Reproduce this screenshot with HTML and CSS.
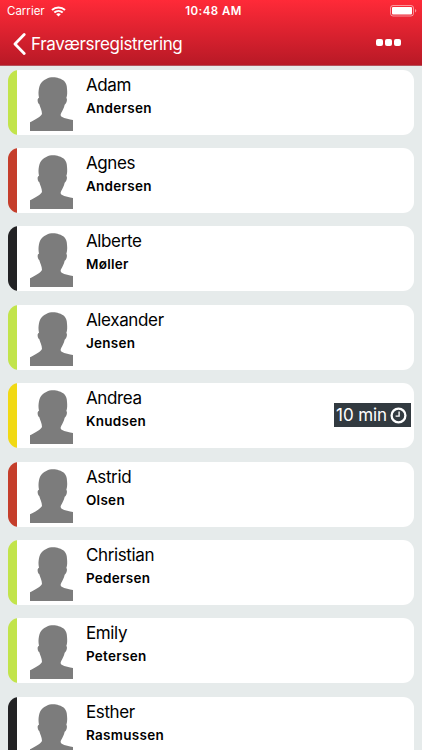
FILE: index.html
```
<!DOCTYPE html>
<html lang="da">
<head>
    <meta charset="UTF-8">
    <meta name="viewport" content="width=device-width, initial-scale=1.0">
    <title>Fraværsregistrering</title>
    <link rel="stylesheet" href="styles.css">
</head>
<body>

    <svg class="symbols" width="0" height="0">
        <symbol id="person" viewBox="0 0 129 162" preserveAspectRatio="none">
            <path d="M27 62C25 52 25 44 27 34C30 14 44 8 50 5C60 0 77 0 86 4C102 8 111 18 111 35C112 46 112 54 109 63C113 65 110 80 104 83C102 93 97 101 94 107C91 112 91 116 95 119C104 125 119 126 129 129V162H0V136C13 129 30 121 36 111C36 100 30 91 28 82C23 78 20 64 27 62Z" fill="#7c7c7c"/>
        </symbol>
    </svg>

    <header class="header">
        <div class="status-bar">
            <div class="carrier">
                <span>Carrier</span>
                <svg class="wifi" width="15" height="11" viewBox="0 0 15 11" fill="none" stroke="#fff" stroke-width="2">
                    <path d="M1 4.1C4.7.6 10.3.6 14 4.1M3.3 6.6C5.7 4.4 9.3 4.4 11.7 6.6"/>
                    <path d="M5.2 8.2Q7.5 6.4 9.8 8.2L7.5 10.6Z" fill="#fff" stroke="none"/>
                </svg>
            </div>
            <div class="time">10:48 AM</div>
            <svg class="battery" width="27" height="12" viewBox="0 0 27 12">
                <rect x=".5" y=".5" width="23" height="10.5" rx="2.5" fill="none" stroke="#fff" stroke-opacity=".5"/>
                <rect x="2" y="2" width="20" height="7.5" rx="1" fill="#fff"/>
                <path d="M25 4V7.6Q26.3 7 26.3 5.8T25 4Z" fill="#fff" fill-opacity=".5"/>
            </svg>
        </div>
        <div class="nav-bar">
            <a class="back" href="#">
                <svg width="13" height="22" viewBox="0 0 13 22" fill="none" stroke="#fff" stroke-width="2.8" stroke-linecap="round" stroke-linejoin="round">
                    <path d="M11.2 1.6L2 11L11.2 20.4"/>
                </svg>
                <span>Fraværsregistrering</span>
            </a>
            <div class="more"><i></i><i></i><i></i></div>
        </div>
    </header>

    <main class="list">
        <div class="card green">
            <svg class="avatar"><use href="#person"/></svg>
            <div class="name"><span>Adam</span><b>Andersen</b></div>
        </div>
        <div class="card red">
            <svg class="avatar"><use href="#person"/></svg>
            <div class="name"><span>Agnes</span><b>Andersen</b></div>
        </div>
        <div class="card black">
            <svg class="avatar"><use href="#person"/></svg>
            <div class="name"><span>Alberte</span><b>Møller</b></div>
        </div>
        <div class="card green">
            <svg class="avatar"><use href="#person"/></svg>
            <div class="name"><span>Alexander</span><b>Jensen</b></div>
        </div>
        <div class="card yellow">
            <svg class="avatar"><use href="#person"/></svg>
            <div class="name"><span>Andrea</span><b>Knudsen</b></div>
            <div class="late">
                <span>10 min</span>
                <svg width="17" height="17" viewBox="0 0 17 17" fill="none" stroke="#fff">
                    <circle cx="8.5" cy="8.5" r="6.9" stroke-width="2.3"/>
                    <path d="M9.1 4.5V9.1H5.6" stroke-width="1.4"/>
                </svg>
            </div>
        </div>
        <div class="card red">
            <svg class="avatar"><use href="#person"/></svg>
            <div class="name"><span>Astrid</span><b>Olsen</b></div>
        </div>
        <div class="card green">
            <svg class="avatar"><use href="#person"/></svg>
            <div class="name"><span>Christian</span><b>Pedersen</b></div>
        </div>
        <div class="card green">
            <svg class="avatar"><use href="#person"/></svg>
            <div class="name"><span>Emily</span><b>Petersen</b></div>
        </div>
        <div class="card black">
            <svg class="avatar"><use href="#person"/></svg>
            <div class="name"><span>Esther</span><b>Rasmussen</b></div>
        </div>
    </main>

</body>
</html>
```
FILE: styles.css
```
body {
    font-family: Inter, "Liberation Sans", sans-serif;
    margin: 0;
    height: 750px;
    overflow: hidden;
    background-color: #e6ebeb;
    color: #000;
}

.symbols {
    display: block;
}

.header {
    height: 66px;
    box-sizing: border-box;
    background: linear-gradient(#ff2a38, #b81926);
    border-bottom: 1px solid #b5505a;
    color: #fff;
}

.status-bar {
    display: grid;
    grid-template-columns: 1fr auto 1fr;
    align-items: center;
    height: 22px;
    padding: 0 5px 0 7px;
    font-size: 11.5px;
}

.carrier {
    display: flex;
    align-items: center;
    gap: 6px;
}

.time {
    font-weight: 600;
    letter-spacing: 0.45px;
    padding-left: 3px;
}

.battery {
    justify-self: end;
    margin-top: -1px;
}

.nav-bar {
    display: flex;
    justify-content: space-between;
    align-items: center;
    height: 43px;
    padding: 0 21px 0 13px;
}

.back {
    display: flex;
    align-items: center;
    gap: 5px;
    color: #fff;
    font-size: 17px;
    letter-spacing: -0.35px;
    text-decoration: none;
}

.more {
    display: flex;
    gap: 2px;
    margin-top: -2px;
}

.more i {
    width: 7px;
    height: 7px;
    border-radius: 2px;
    background-color: #fff;
}

.list {
    display: flex;
    flex-direction: column;
    gap: 13.4px;
    padding: 3.6px 8.4px 0;
}

.card {
    display: flex;
    flex: none;
    height: 65px;
    box-sizing: border-box;
    padding-left: 21.5px;
    border-radius: 11px;
    background: linear-gradient(to right, #222224 8.8px, #fff 8.8px);
}

.green {
    background: linear-gradient(to right, #c2e44b 8.8px, #fff 8.8px);
}

.red {
    background: linear-gradient(to right, #c53e2b 8.8px, #fff 8.8px);
}

.yellow {
    background: linear-gradient(to right, #f1d914 8.8px, #fff 8.8px);
}

.avatar {
    width: 43px;
    height: 54px;
    margin-top: 7px;
}

.name {
    display: flex;
    flex-direction: column;
    margin-left: 13px;
    padding-top: 4px;
}

.name span {
    font-size: 17px;
    line-height: 23px;
    letter-spacing: -0.35px;
}

.name b {
    font-size: 13.5px;
    font-weight: 600;
    line-height: 22px;
    letter-spacing: 0.3px;
}

.late {
    display: flex;
    align-items: center;
    justify-content: space-between;
    align-self: center;
    width: 77px;
    height: 24px;
    box-sizing: border-box;
    margin-left: auto;
    margin-right: 2.5px;
    margin-top: -1px;
    padding: 0 4px 0 2px;
    background-color: #323a40;
    color: #fff;
    font-size: 17px;
    letter-spacing: -0.1px;
    white-space: nowrap;
}
```
